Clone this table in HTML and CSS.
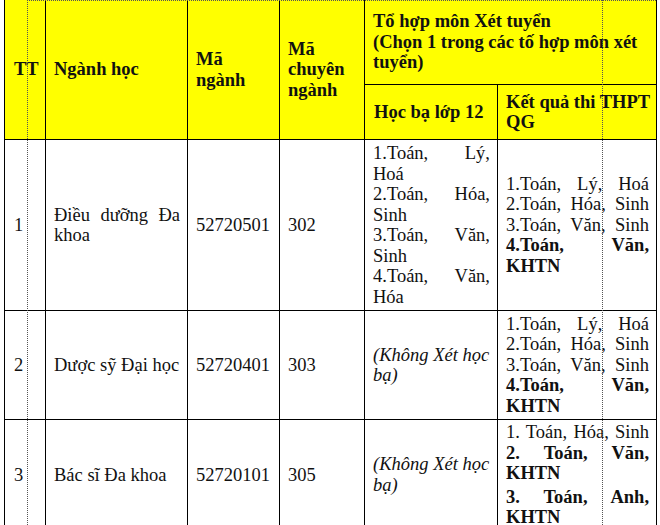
FILE: index.html
```html
<!DOCTYPE html>
<html lang="vi">
<head>
<meta charset="utf-8">
<link rel="stylesheet" href="styles.css">
</head>
<body>
<div class="sheet">
  <table class="grid">
    <colgroup>
      <col class="c-tt"><col class="c-name"><col class="c-code"><col class="c-sub"><col class="c-hb"><col class="c-kq">
    </colgroup>
    <thead>
      <tr class="h1">
        <th rowspan="2" class="mid">TT</th>
        <th rowspan="2" class="mid">Ngành học</th>
        <th rowspan="2" class="mid">Mã<br>ngành</th>
        <th rowspan="2" class="mid">Mã<br>chuyên<br>ngành</th>
        <th colspan="2" class="top">Tổ hợp môn Xét tuyển<br>(Chọn 1 trong các tố hợp môn xét tuyển)</th>
      </tr>
      <tr class="h2">
        <th class="mid">Học bạ lớp 12</th>
        <th class="mid wide">Kết quả thi THPT QG</th>
      </tr>
    </thead>
    <tbody>
      <tr class="r1">
        <td>1</td>
        <td class="just">Điều dưỡng Đa khoa</td>
        <td>52720501</td>
        <td>302</td>
        <td class="list">
          <p>1.Toán, Lý, Hoá</p>
          <p>2.Toán, Hóa, Sinh</p>
          <p>3.Toán, Văn, Sinh</p>
          <p>4.Toán, Văn, Hóa</p>
        </td>
        <td class="list">
          <p class="full">1.Toán, Lý, Hoá</p>
          <p class="full">2.Toán, Hóa, Sinh</p>
          <p class="full">3.Toán, Văn, Sinh</p>
          <p class="b">4.Toán, Văn, KHTN</p>
        </td>
      </tr>
      <tr class="r2">
        <td>2</td>
        <td>Dược sỹ Đại học</td>
        <td>52720401</td>
        <td>303</td>
        <td class="it">(Không Xét học bạ)</td>
        <td class="list">
          <p class="full">1.Toán, Lý, Hoá</p>
          <p class="full">2.Toán, Hóa, Sinh</p>
          <p class="full">3.Toán, Văn, Sinh</p>
          <p class="b">4.Toán, Văn, KHTN</p>
        </td>
      </tr>
      <tr class="r3">
        <td>3</td>
        <td>Bác sĩ Đa khoa</td>
        <td>52720101</td>
        <td>305</td>
        <td class="it">(Không Xét học bạ)</td>
        <td class="list">
          <p class="full">1. Toán, Hóa, Sinh</p>
          <p class="b">2. Toán, Văn, KHTN</p>
          <p class="b gap">3. Toán, Anh, KHTN</p>
        </td>
      </tr>
    </tbody>
  </table>
  <div class="dot-v dot-a"></div>
  <div class="dot-v dot-b"></div>
  <div class="dot-h"></div>
</div>
</body>
</html>
```
FILE: styles.css
```css
html, body {
  margin: 0;
  padding: 0;
  background: #fff;
}
body {
  font-family: "Liberation Serif", "Times New Roman", serif;
  font-size: 18.5px;
  color: #111;
  overflow: hidden;
  height: 525px;
}
.sheet {
  position: relative;
  padding-left: 4px;
  margin-top: -1px;
}
.grid {
  border-collapse: collapse;
  table-layout: fixed;
  width: 652px;
}
.c-tt { width: 41px; }
.c-name { width: 142px; }
.c-code { width: 92px; }
.c-sub { width: 85px; }
.c-hb { width: 133px; }
.c-kq { width: 159px; }

.grid th, .grid td {
  border: 1px solid #000;
  padding: 2px 7px 2px 8px;
  text-align: left;
  vertical-align: middle;
  line-height: 20.5px;
}
.grid th {
  background: #ffff00;
  font-weight: bold;
}
.grid th.top {
  vertical-align: top;
  padding-top: 11px;
}
.grid th.wide {
  padding-right: 2px;
}
.h1 th { height: 85px; box-sizing: border-box; }
.h1 { height: 85px; }
.h2 { height: 55px; }
.r1 { height: 171px; }
.r2 { height: 109px; }
.r3 { height: 110px; }

.grid td:first-child, .grid th:first-child {
  padding-left: 9px;
}
.just {
  text-align: justify !important;
}
.list p {
  margin: 0;
  text-align: justify;
}
.list p.full {
  text-align-last: justify;
}
.list p.b {
  font-weight: bold;
}
.list p.gap {
  margin-top: 3px;
}
.it {
  font-style: italic;
}

.dot-v {
  position: absolute;
  top: 0;
  height: 530px;
  width: 0;
  border-left: 1px dotted #555;
}
.dot-a { left: 27px; }
.dot-b { left: 602px; }
.dot-h {
  position: absolute;
  top: 1px;
  left: 27px;
  width: 629px;
  height: 0;
  border-top: 1px dotted #555;
}
```
